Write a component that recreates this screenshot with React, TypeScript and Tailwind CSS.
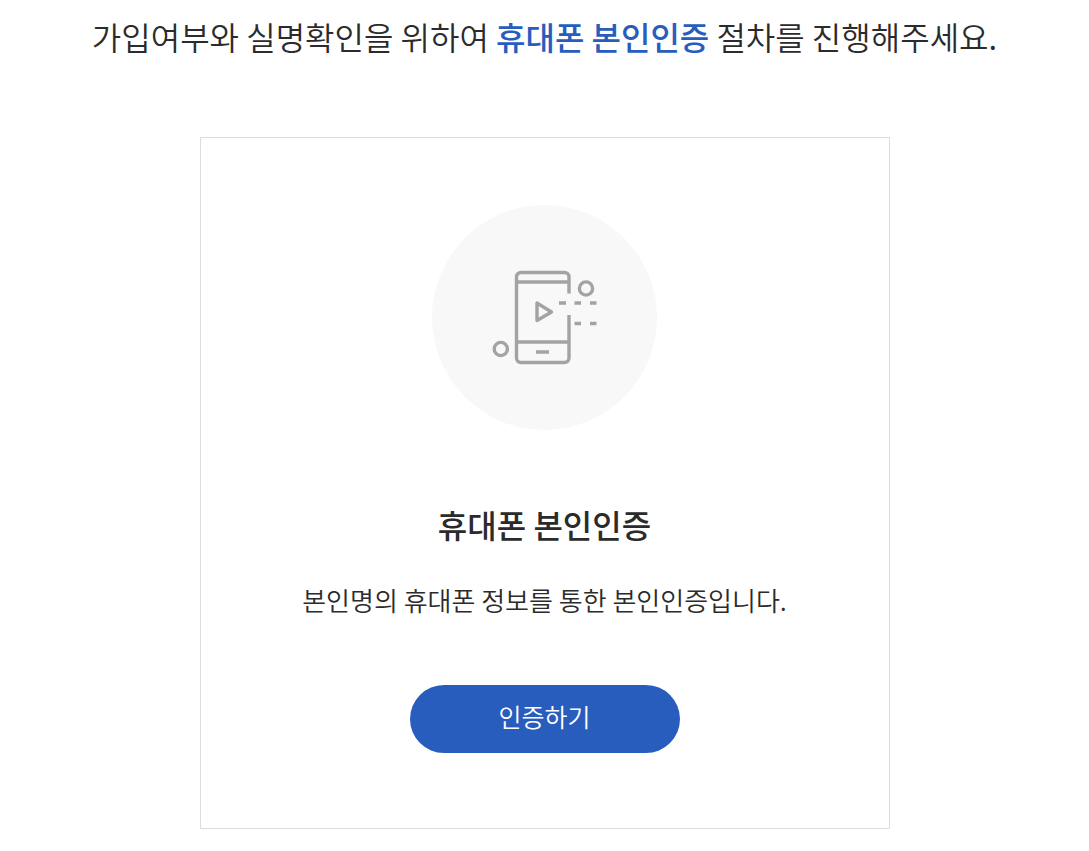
const PhoneIcon = () => (
  <svg viewBox="0 0 110 100" className="w-[110px] h-[100px]" fill="none" stroke="#a3a3a3" strokeWidth="3.4" aria-hidden="true">
    <path d="M79 25.5V9a4.5 4.5 0 0 0-4.5-4.5H31A4.5 4.5 0 0 0 26.5 9v81a4.5 4.5 0 0 0 4.5 4.5h43.500A4.5 4.5 0 0 0 79 90V47" />
    <path d="M26.5 14H79M26.5 74H79M46 84h13" />
    <path d="M47 35v17.5L61.5 44z" strokeLinejoin="round" />
    <path d="M69 35h7M84.5 35H91M100 35h6.5M84.5 55.5H91M100 55.5h6.5" />
    <circle cx="96" cy="20.5" r="6.6" />
    <circle cx="10.8" cy="81" r="6.6" />
  </svg>
);

const App: React.FC = () => {
  return (
    <main className="px-4 pt-3 pb-6 text-center font-['Noto_Sans_CJK_KR',sans-serif] text-[#2b2b2b]">
      <h1 className="text-[32px] leading-[48px] font-[350]">
        가입여부와 실명확인을 위하여 <strong className="font-medium text-[#285dbe]">휴대폰 본인인증</strong> 절차를 진행해주세요.
      </h1>

      <section className="mx-auto mt-[77px] flex max-w-[690px] flex-col items-center border border-[#dddddd] px-6 pt-[67px] pb-[75px]">
        <div className="flex size-[225px] items-center justify-center rounded-full bg-[#f8f8f8]">
          <PhoneIcon />
        </div>
        <h2 className="mt-[70px] text-[32px] leading-[48px] font-medium">휴대폰 본인인증</h2>
        <p className="mt-8 text-[26px] leading-10 font-[350]">본인명의 휴대폰 정보를 통한 본인인증입니다.</p>
        <button type="button" className="mt-[65px] h-[68px] w-[270px] rounded-full bg-[#285dbe] pb-1 text-[25px] font-[350] text-white">
          인증하기
        </button>
      </section>
    </main>
  );
};

export default App;
